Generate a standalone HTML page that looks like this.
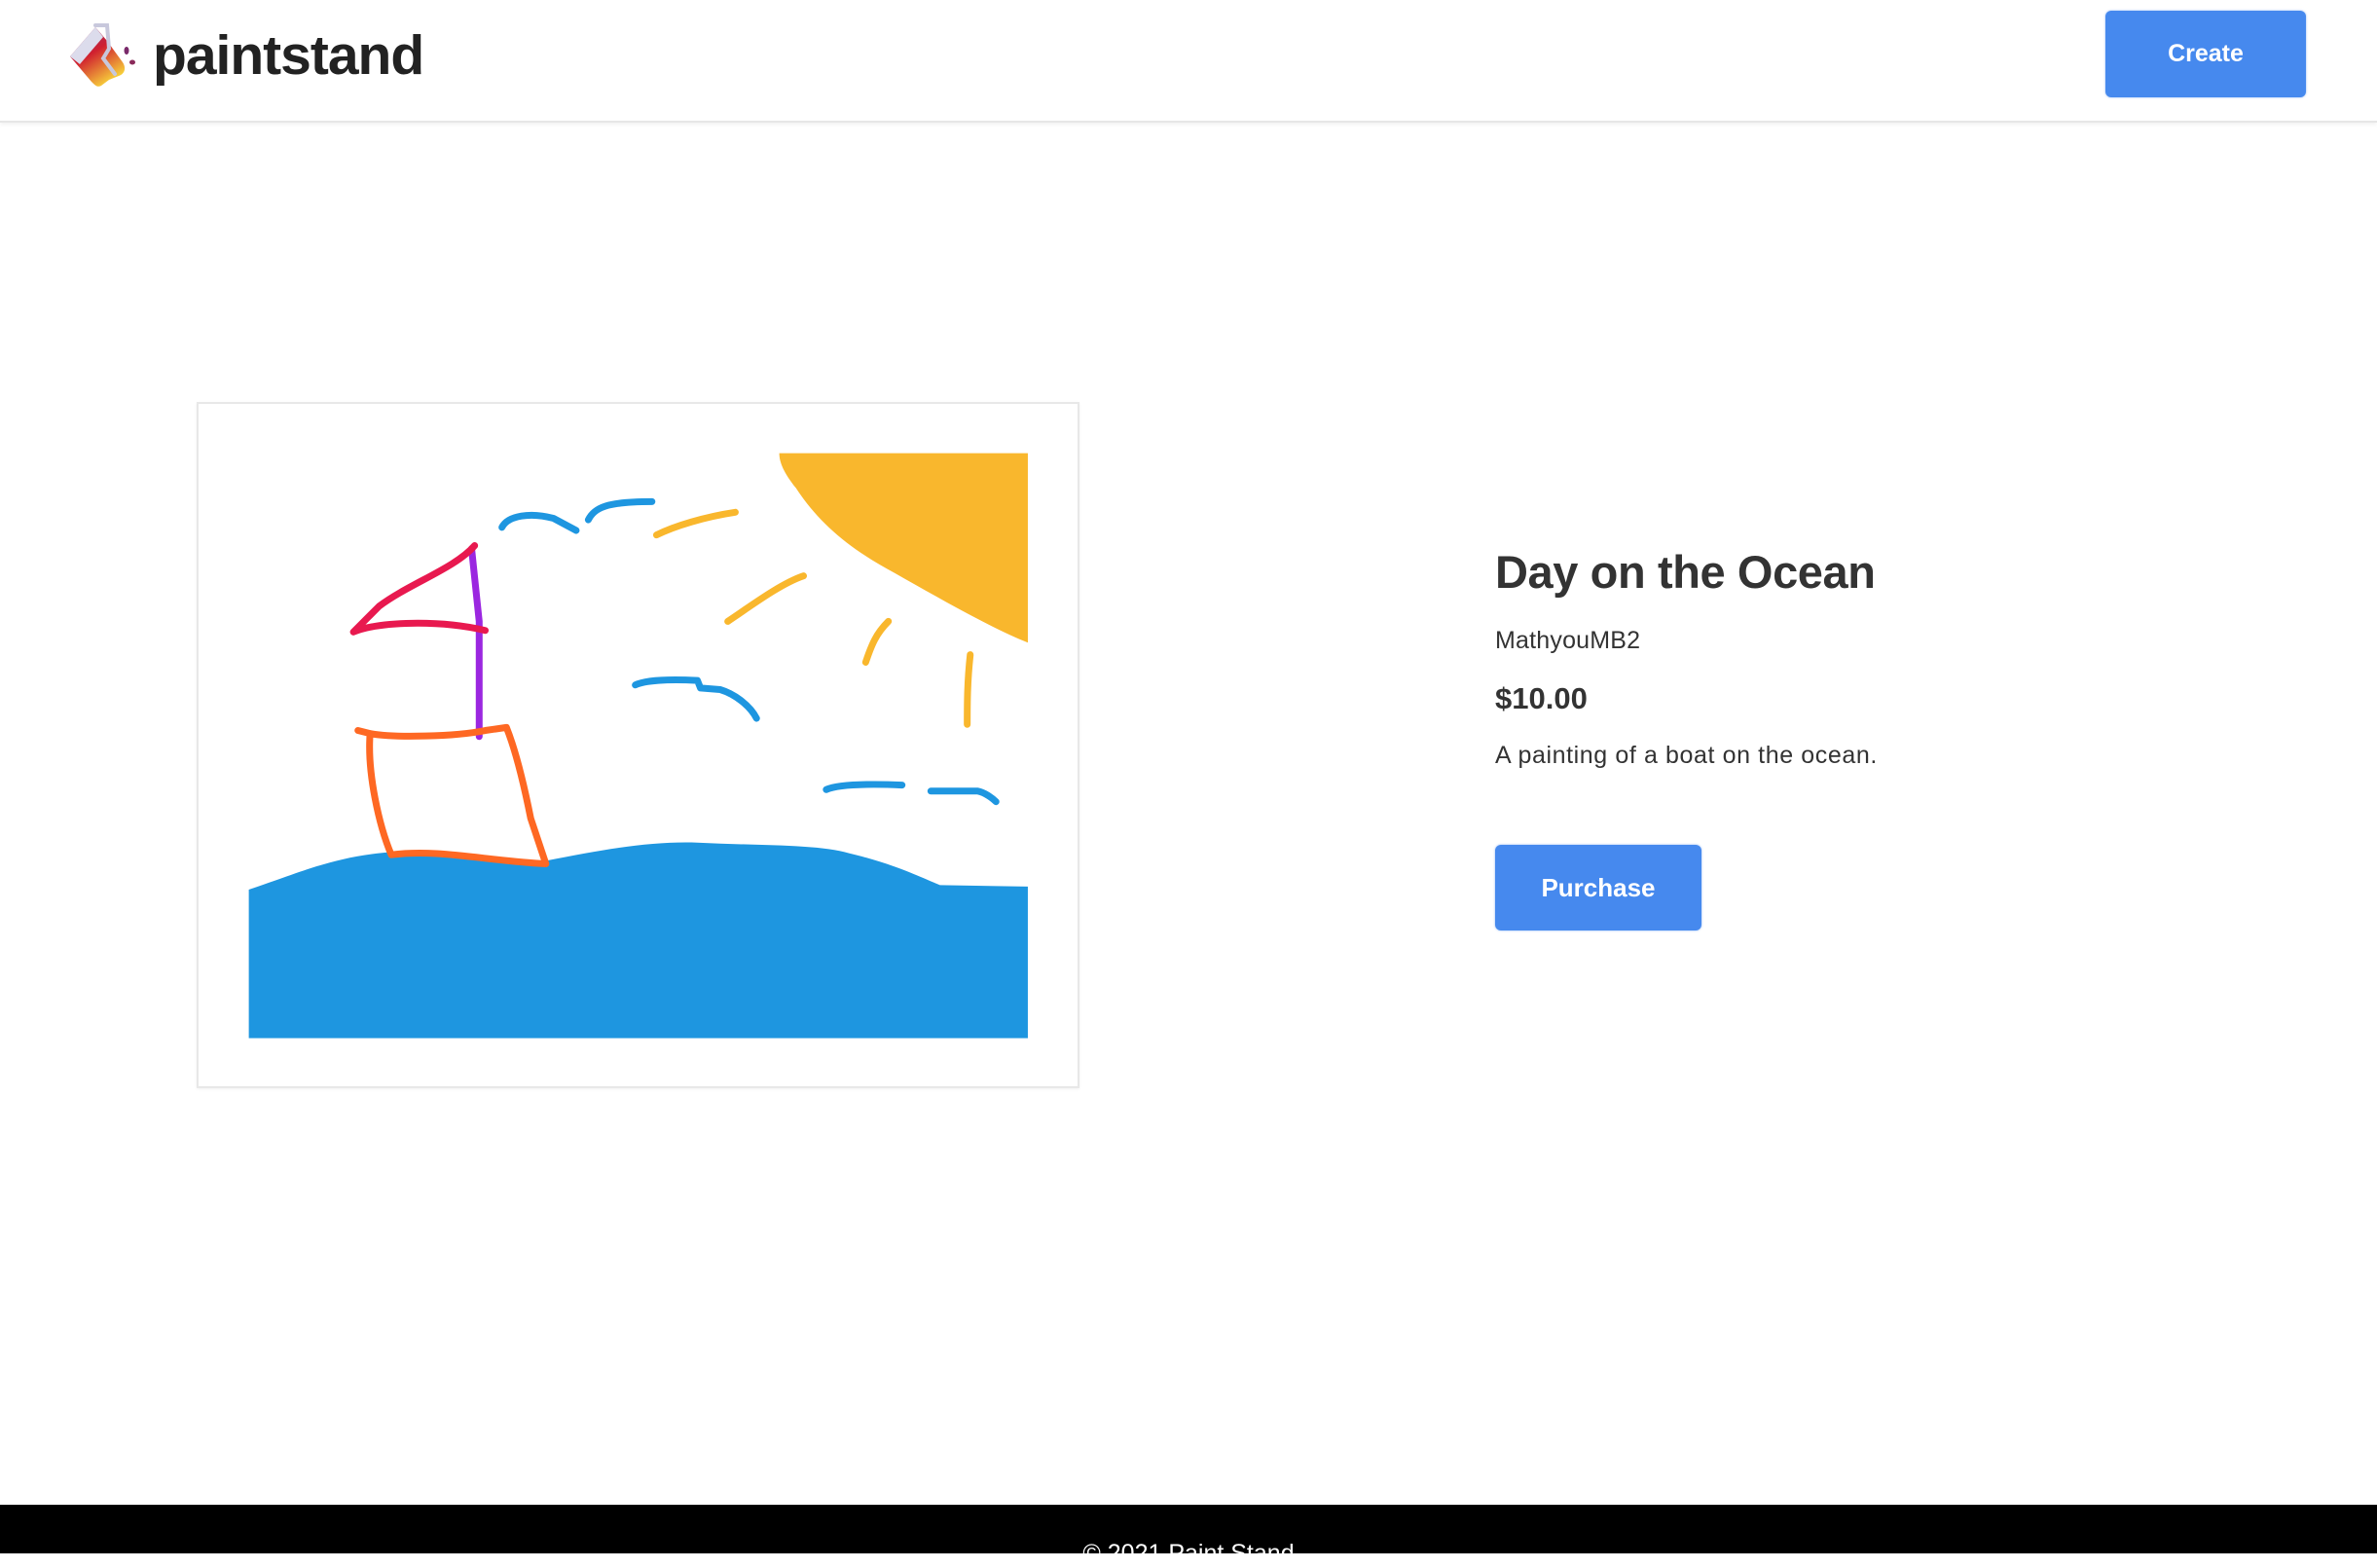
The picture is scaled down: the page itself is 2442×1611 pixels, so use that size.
<!DOCTYPE html>
<html><head><meta charset="utf-8"><style>
*{margin:0;padding:0;box-sizing:border-box}
html,body{width:2442px;height:1596px;overflow:hidden;background:#fff;font-family:"Liberation Sans",sans-serif;color:#333}
.hdr{position:absolute;left:0;top:0;width:2442px;height:126px;background:#fff;border-bottom:2px solid #e6e6e6;box-shadow:0 2px 4px rgba(0,0,0,.06)}
.logo{position:absolute;left:157px;top:24px;font-size:57px;font-weight:bold;color:#222;letter-spacing:-1px}
.btn{position:absolute;background:#4689ee;color:#fff;font-weight:bold;border-radius:6px;display:flex;align-items:center;justify-content:center;box-shadow:0 0 2px rgba(70,137,238,.6)}
.card{position:absolute;left:202px;top:413px;width:907px;height:705px;border:2px solid #e8e8e8;box-shadow:0 1px 3px rgba(0,0,0,.06);background:#fff}
.t{position:absolute;left:1536px;white-space:nowrap}
.foot{position:absolute;left:0;top:1546px;width:2442px;height:50px;background:#000;color:#fff;text-align:center;font-size:25px;padding-top:36px}
</style></head><body>
<div class="hdr">
<svg style="position:absolute;left:68px;top:20px" width="76" height="72" viewBox="0 0 76 72">
<defs><linearGradient id="g" x1="0" y1="0" x2="0.6" y2="1"><stop offset="0" stop-color="#7a3a8a"/><stop offset="0.5" stop-color="#d0202f"/><stop offset="1" stop-color="#f7d03a"/></linearGradient></defs>
<path d="M4,38 L30,8 L42,22 L58,44 C62,50 60,56 54,58 L44,62 L36,68 C32,70 30,68 26,64 Z" fill="url(#g)"/>
<path d="M4,38 L30,8 L38,18 L14,46 Z" fill="#dcdcec"/>
<path d="M30,6 L42,6 L44,30 L38,40 L50,56" stroke="#c8c8dc" stroke-width="4" fill="none" stroke-linecap="round"/>
<ellipse cx="62" cy="32" rx="2.5" ry="4" fill="#7a2a6a"/><ellipse cx="68" cy="44" rx="3" ry="2.5" fill="#8a2a5a"/>
</svg>
<div class="logo">paintstand</div>
<div class="btn" style="left:2163px;top:11px;width:206px;height:89px;font-size:25px">Create</div>
</div>
<div class="card"></div>
<svg style="position:absolute;left:0;top:0" width="2442" height="1596" viewBox="0 0 1568 1025">
<path d="M514,299 L678,299 L678,424 C655,415 620,395 590,378 C560,362 540,345 525,322 C517,312 514,305 514,299 Z" fill="#f9b72d"/>
<path d="M164,587 C200,575 220,565 260,562 C300,560 330,568 360,568 C400,560 430,555 460,556 C500,558 540,557 560,563 C590,570 610,580 620,584 L678,585 L678,685 L164,685 Z" fill="#1e96e0"/>
<g fill="none" stroke-width="4.5" stroke-linecap="round" stroke-linejoin="round">
<g stroke="#1e96e0">
<path d="M331,348 C335,340 350,338 365,342 L380,350"/><path d="M388,343 C392,335 400,331 430,331"/>
<path d="M419,452 C425,449 440,448 460,449 L462,454 L475,455 C485,458 495,466 499,474"/>
<path d="M545,521 C552,518 570,517 595,518"/><path d="M614,522 L645,522 C650,523 655,527 657,529"/>
</g>
<g stroke="#f9b72d">
<path d="M433,353 C445,347 465,341 485,338"/><path d="M480,410 C495,400 515,385 530,380"/>
<path d="M571,437 C575,425 578,418 586,410"/><path d="M640,432 C638,450 638,465 638,478"/>
</g>
<path d="M311,362 L316,410 L316,486" stroke="#9b27e0"/>
<path d="M313,360 C300,375 270,385 250,400 L233,417 C250,410 290,409 320,416" stroke="#e8194f"/>
<path d="M236,482 L244,484 C242,510 250,545 258,564 C290,560 320,568 360,570 L350,540 C345,515 340,495 334,480 L320,482 C300,486 260,487 244,484" stroke="#fe6823"/>
</g>
</svg>
<div class="t" style="top:560px;font-size:47px;font-weight:bold;letter-spacing:-0.4px">Day on the Ocean</div>
<div class="t" style="top:644px;font-size:25px;letter-spacing:0.2px">MathyouMB2</div>
<div class="t" style="top:700px;font-size:31px;font-weight:bold">$10.00</div>
<div class="t" style="top:762px;font-size:25px;letter-spacing:0.6px">A painting of a boat on the ocean.</div>
<div class="btn" style="left:1536px;top:868px;width:212px;height:88px;font-size:26px">Purchase</div>
<div class="foot">© 2021 Paint Stand</div>
</body></html>
